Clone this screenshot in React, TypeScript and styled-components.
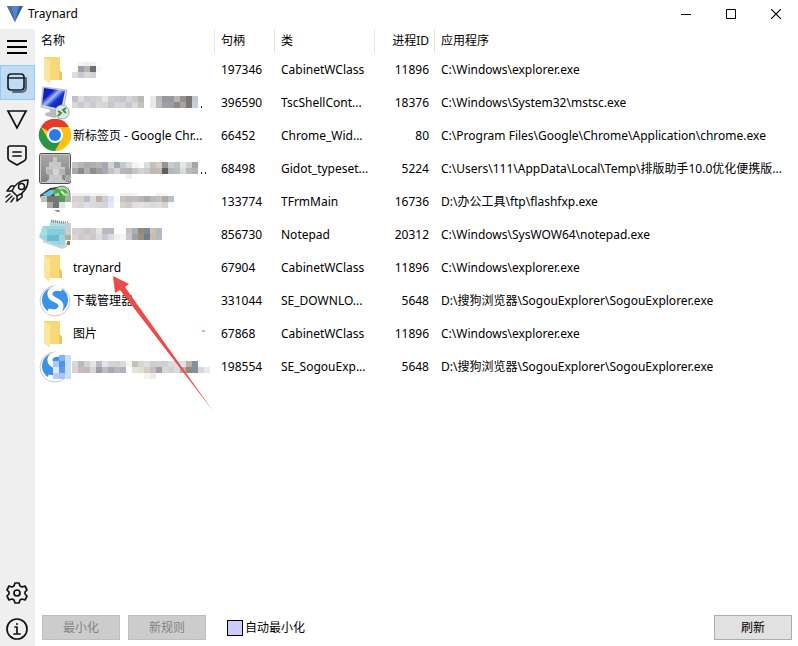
import React from 'react';
import styled, { createGlobalStyle, css } from 'styled-components';

const GlobalStyle = createGlobalStyle`
  *, *::before, *::after { box-sizing: border-box; }
  body { margin: 0; background: #fff; }
  body, button, input, table {
    font-family: 'Noto Sans', 'Noto Sans CJK SC', sans-serif;
    font-size: 12px;
    line-height: 16px;
    color: #000;
  }
`;

const Window = styled.div`
  display: flex;
  flex-direction: column;
  min-height: 100vh;
  background: #fff;
`;

const TitleBar = styled.header`
  display: flex;
  align-items: center;
  height: 29px;
  padding: 0 0 2px 7px;
`;

const Title = styled.h1`
  flex: 1;
  margin: 0 0 0 5px;
  font-size: 12px;
  font-weight: 400;
`;

const CaptionButton = styled.button`
  display: flex;
  align-items: center;
  justify-content: center;
  width: 45px;
  height: 26px;
  padding: 0;
  border: 0;
  background: transparent;
`;

const Body = styled.div`
  display: flex;
  flex: 1;
`;

const SideBar = styled.nav`
  display: flex;
  flex-direction: column;
  flex: none;
  gap: 1px;
  width: 35px;
  background: #efefef;
`;

const SideButton = styled.button<{ $active?: boolean }>`
  display: flex;
  align-items: center;
  justify-content: center;
  width: 35px;
  height: 35px;
  padding: 0 1px 0 0;
  border: 1px solid transparent;
  background: transparent;
  ${p => p.$active && css`
    border-color: #91c9f7;
    background: #c0dcf3;
  `}
`;

const Spacer = styled.div`
  flex: 1;
`;

const Main = styled.main`
  display: flex;
  flex-direction: column;
  flex: 1;
  min-width: 0;
`;

const Table = styled.table`
  width: 100%;
  table-layout: fixed;
  border-collapse: collapse;
`;

const Col = styled.col<{ $width?: number }>`
  width: ${p => (p.$width ? `${p.$width}px` : 'auto')};
`;

const Th = styled.th<{ $right?: boolean }>`
  height: 24px;
  padding: 0 6px;
  font-weight: 400;
  text-align: ${p => (p.$right ? 'right' : 'left')};
  box-shadow: inset -1px 0 #e5e5e5;
  &:last-child { box-shadow: none; }
`;

const Td = styled.td<{ $right?: boolean }>`
  height: 33px;
  padding: 0 6px;
  overflow: hidden;
  text-align: ${p => (p.$right ? 'right' : 'left')};
  text-overflow: ellipsis;
  white-space: nowrap;
`;

const NameTd = styled.td`
  height: 33px;
  padding: 0 3px;
`;

const NameCell = styled.div`
  display: flex;
  align-items: center;
  height: 33px;
`;

const NameText = styled.span`
  overflow: hidden;
  padding-left: 1px;
  text-overflow: ellipsis;
  white-space: nowrap;
`;

const IconSlot = styled.svg`
  flex: none;
  width: 34px;
  height: 33px;
`;

const MosaicSvg = styled.svg`
  flex: none;
  width: 138px;
  height: 33px;
`;

const TableArea = styled.section`
  position: relative;
  flex: 1;
`;

const Arrow = styled.svg`
  position: absolute;
  top: 245px;
  left: 75px;
  width: 105px;
  height: 139px;
  pointer-events: none;
`;

const Footer = styled.footer`
  display: flex;
  align-items: center;
  gap: 8px;
  padding: 0 6px 6px 7px;
`;

const Button = styled.button`
  width: 78px;
  height: 25px;
  padding: 0;
  border: 1px solid #adadad;
  background: #e1e1e1;
  &:disabled {
    border-color: #bfbfbf;
    background: #ccc;
    color: #838383;
  }
`;

const CheckLabel = styled.label`
  display: flex;
  flex: 1;
  align-items: center;
  gap: 2px;
  padding-left: 13px;
`;

const CheckBox = styled.input`
  width: 16px;
  height: 16px;
  margin: 0;
  border: 1px solid #000;
  background: #ccf;
  appearance: none;
  &:checked { background: #55c; }
`;

const FolderIcon = () => (
  <IconSlot viewBox="0 0 34 33" aria-hidden="true">
    <path d="M6 4h16v14l2 2v7H8z" fill="#f6d478" />
    <path d="M11 4h11v14l2 2v7H11z" fill="#f8d878" />
    <path d="M22 18l2 2v7h-3v-9z" fill="#edc45e" />
    <path d="M6 4l6 4v23l-6-5z" fill="#ffe49c" />
  </IconSlot>
);

const RemoteIcon = () => (
  <IconSlot viewBox="0 0 34 33" aria-hidden="true">
    <defs>
      <linearGradient id="screen" x1="0" y1="0" x2="1" y2="1">
        <stop offset="0" stopColor="#0b1fb6" />
        <stop offset=".3" stopColor="#0a22d0" />
        <stop offset=".45" stopColor="#a8baf8" />
        <stop offset=".6" stopColor="#1634d4" />
        <stop offset="1" stopColor="#061291" />
      </linearGradient>
    </defs>
    <path d="M11 22l10 2v5l-4 3-9-2-1-3 5-1z" fill="#b8bcc0" />
    <path d="M5 1l24 3-4 22L3 21z" fill="#d5dadd" stroke="#b6bdc2" />
    <path d="M6 2l21 3-4 18L4 19z" fill="url(#screen)" />
    <circle cx="24" cy="26" r="7" fill="#e6e8e7" stroke="#a2a5a7" />
    <path d="M20 25l3 2-3 3M28 22l-3 2 3 3" fill="none" stroke="#2c9a48" strokeWidth="2" />
  </IconSlot>
);

const ChromeIcon = () => (
  <IconSlot viewBox="0 0 34 33" aria-hidden="true">
    <circle cx="17" cy="16" r="16" fill="#fbc116" />
    <path d="M17 16L3 8A16 16 0 0 1 31 8z" fill="#e33b2e" />
    <path d="M3 8A16 16 0 0 0 17 32L24 20 10 20z" fill="#269547" />
    <path d="M17 8h14a16 16 0 0 1-14 24l7-12z" fill="#fbc116" />
    <circle cx="17" cy="16" r="8" fill="#fff" />
    <circle cx="17" cy="16" r="6" fill="#2c7be5" />
  </IconSlot>
);

const TypesetIcon = () => (
  <IconSlot viewBox="0 0 34 33" aria-hidden="true">
    <defs>
      <linearGradient id="metal" x1="0" y1="0" x2="0" y2="1">
        <stop offset="0" stopColor="#a9a9a9" />
        <stop offset="1" stopColor="#818181" />
      </linearGradient>
    </defs>
    <rect x="1.500" y="1.500" width="31" height="30" rx="2" fill="url(#metal)" stroke="#4d4d4d" />
    <rect x="2.500" y="2.500" width="29" height="28" rx="1" fill="none" stroke="#c9c9c9" />
    <path d="M15 5h4v5h4v5h4v6h-3v6l5 3H8l3-3v-6H8v-6h3v-5h4z" fill="#c7c8c9" />
    <path d="M9 17h6v6H9zM21 17h6v6h-6z" fill="#b6b6b6" />
    <path d="M15 17h6v6h-6z" fill="#d4d4d4" />
    <path d="M27 17h6v6h-6z" fill="#8e8e8e" />
    <path d="M27 23h6v6h-6z" fill="#aaa" />
  </IconSlot>
);

const FlashIcon = () => (
  <IconSlot viewBox="0 0 34 33" aria-hidden="true">
    <path d="M2 10l10-7 14-2-12 13H3z" fill="#29404c" />
    <path d="M4 10l8-5 10-1-11 8z" fill="#6ec2d8" />
    <circle cx="24" cy="9" r="8" fill="#c1c7c0" stroke="#747b75" />
    <path d="M16 9l3-6 3 2c4-2 7 0 8 4-3-2-4-1-5 2h-4V8z" fill="#2dc31d" />
    <path d="M23 6l3 3" stroke="#e6f6e2" strokeWidth="2" />
    <path d="M3 11h6v6H3z" fill="#b8c6bf" />
    <path d="M9 11h12v6H9zM15 17h6v6h-6z" fill="#777474" />
    <path d="M21 11h6v6h-6z" fill="#5c9664" />
    <path d="M27 11h6v6h-6z" fill="#9db79c" />
    <path d="M9 17h6v6H9z" fill="#aaa" />
    <path d="M21 17h6v6h-6z" fill="#dfe6df" />
    <path d="M16 25h5l1 2h-3z" fill="#8d8f8d" />
  </IconSlot>
);

const NotepadIcon = () => (
  <IconSlot viewBox="0 0 34 33" aria-hidden="true">
    <path d="M13 2l17 3-3 25-20-6z" fill="#b5dce3" />
    <path d="M13 3l17 2" stroke="#8b999e" strokeWidth="3" strokeDasharray="1 1" />
    <path d="M5 8h22v18l-6 2-16-6-4-3z" fill="#9bd5df" />
    <path d="M3 11h6v6H3z" fill="#a8dde6" />
    <path d="M9 11h6v6H9z" fill="#8bcddc" />
    <path d="M15 11h12v6H15z" fill="#89cbdb" />
    <path d="M9 17h12v6H9z" fill="#69bdcf" />
    <path d="M27 5h6v12h-6z" fill="#c4d1d0" />
    <path d="M27 17h6v5h-6z" fill="#b7ad9b" />
    <path d="M5 23l19 7 4-2 1-3" fill="none" stroke="#c1d4dc" strokeWidth="2" />
    <path d="M29 23h3v4h-3z" fill="#9b793b" />
  </IconSlot>
);

const SogouIcon = ({ blurred }: { blurred?: boolean }) => (
  <IconSlot viewBox="0 0 34 33" aria-hidden="true">
    <circle cx="17" cy="17" r="15" fill="#fff" stroke="#c9c9c9" />
    <circle cx="17" cy="16" r="13" fill="#3c91e8" />
    <path d="M24 5C17 3 11 6 12 11c1 6 11 4 11 11 0 5-6 7-13 5" fill="none" stroke="#fff" strokeWidth="5" />
    {blurred && (
      <g>
        <path d="M15 11h6v6h-6z" fill="#a8cbf7" />
        <path d="M21 5h6v6h-6z" fill="#82b6ee" />
        <path d="M27 5h6v24h-6z" fill="#c9dff6" />
        <path d="M21 11h6v6h-6z" fill="#4e91ed" />
        <path d="M15 17h6v6h-6z" fill="#dbe8fc" />
        <path d="M21 17h6v6h-6z" fill="#5e9af0" />
        <path d="M15 23h6v6h-6z" fill="#b3d0fa" />
        <path d="M21 23h6v6h-6z" fill="#a6c8f7" />
      </g>
    )}
  </IconSlot>
);

type Tiles = { top: number; heights: number[]; rows: string[][] };

const Mosaic = ({ tiles, dots = 0 }: { tiles: Tiles; dots?: number }) => {
  const tops = tiles.heights.map((_, i) =>
    tiles.heights.slice(0, i).reduce((sum, h) => sum + h, tiles.top));
  return (
    <MosaicSvg viewBox="0 0 138 33" role="img" aria-label="已隐藏">
      {tiles.rows.map((row, r) =>
        row.map((color, c) => color && (
          <rect key={`${r}-${c}`} x={c * 6} y={tops[r]} width="6" height={tiles.heights[r]} fill={`#${color}`} />
        )))}
      {dots > 0 && <rect x="129" y="20" width="1" height="2" fill="#222" />}
      {dots > 1 && <rect x="133" y="20" width="1" height="2" fill="#222" />}
    </MosaicSvg>
  );
};

const split = (s: string) => s.split(' ').map(c => (c === '-' ? '' : c));

const folderTiles: Tiles = {
  top: 9, heights: [4, 6, 6],
  rows: [
    split('- f4f4f6 eeeef1 f1f1f4 -'),
    split('fffff0 d8d5e2 8d879c b8b5b3 706d70'),
    split('d6d8d9 c8c7cc d5d5d6 c2bfc5 e0e0e2'),
  ].map((row, i) => (i === 1
    ? ['fffff0', 'a09bae', 'b8b5b3', '706d70', 'fbf8f2']
    : i === 2 ? ['dcdcdc', 'c8c7cc', 'd9d9da', 'd2cfd5', ''] : row)),
};

const remoteTiles: Tiles = {
  top: 10, heights: [6, 6],
  rows: [
    split('bfc0c3 e1dcdf c9cbce d2cdd1 d1d3d4 e6e5e5 cfcccc cbc9cf c4c5ca d8d4d2 c9c8cc bbb7b5 - e9e8ea b8b9ba 97979b 9999a0 b9b5b2 939191 777775 c1cad4'),
    split('d8d8d9 ccc9ce d6d7dc cdcacb dfd8d8 d3d6dc c7c8cb d8d5d6 d4d4d8 c8c6ca d9d8dc c4c1bd - ebe8e5 c0bdbe a0a0a4 a09ea3 8d8b8b aaa29e 797772 c7d0d7'),
  ],
};

const typesetTiles: Tiles = {
  top: 10, heights: [6, 6, 5],
  rows: [
    split('c3c3c6 b5b4b6 aeaaa6 b3aeac b9b5b6 a6a7b1 d4d4d7 9faab1 c5c9ce d9dce2 f1f4f4 fbfbfb dedddd c2c1c1 d4ccc8 969696 cccccb bec2c2 e2e8e7 d0d0cf a4a7aa'),
    split('aaa7a8 8b8b8d b0adb0 8e8e92 a09fa3 a8a8b6 c3c2c5 d6d3d1 b3b6bb b6b3b7 c5c5c5 d0d3d3 ceccca b9b9b9 c9b9aa 5e5f63 aeb8c1 b9bdbd d3dedd b9b9b8 b2b4ae'),
    split('- - - - - - - - - f0eeee - - - - - - - - - - -'),
  ],
};

const flashTiles: Tiles = {
  top: 8, heights: [3, 6, 6],
  rows: [
    split('f0f0f0 f1f1f2 eff1f5 f4f3f3 f2f1ef f4f4f4 - - f1f1f1 f3f3f3 f4f4f4 - - - f2f2f2 f5f5f5 -'),
    split('d5cfd1 d3d1d2 b9bdc8 dfdbdc beb3a7 c8d0d4 dce4f3 fafbfc c5c0c4 c5b8b9 c0bebe b8b6b5 adabaa bbb9b9 c3c0c0 b3a7a8 b8c1ca'),
    split('e1dadd d8d3d7 dfdfe4 dbd8d8 d9d6d9 d3d5dc e7e8f1 - d6d0d1 d1c9ce e0dfdf e4e2e2 dededd dcdada e0dfdf d6d3d3 f4f8fa'),
  ],
};

const notepadTiles: Tiles = {
  top: 10, heights: [6, 6],
  rows: [
    split('d4cfcf d1cdd5 c7c6c5 cdcdd1 e0e8df bdb6bd b7bac5 - - c4c2ba abacb7 958a80 7e8892 ccc0b2 adbac9'),
    split('dcd4d4 cccbcc d5ced3 cbc7cb dedbdf ccc6d2 d9dce0 efeff0 f4f4f5 c5c8cf 9fa1a9 9e8e7b 717d8b cbbcaa b2bcc8'),
  ],
};

const sogouTiles: Tiles = {
  top: 11, heights: [6, 6, 6],
  rows: [
    split('dbd9d4 bab9bd d0d0d8 e5e5e6 bcbdc2 e4e5e5 d4d3d7 d2d2d2 d9dadf f4f4ee c1c0bc d7d5d3 dfdddc d1cbd2 d4cfd5 cad0d6 e1d9dc d3e0e5 dce2e9 b9b1a1 87939c - -'),
    split('d8d4d3 c5bbb9 c5b7ba d5d5d9 9e9ca9 bbbcc4 a9aab0 b8b8bb b2b1bd - e4e6da e3dfcc d2cfc5 c4bebc a69ca4 dcd8da cbd4d4 dedbda b9aaa4 8f8b81 869098 d8d8d9 e9e9ec'),
    split('- - - - - - - - - - - - f5f4ee eeecef - - - - - - - - -'),
  ],
};

interface WindowRow {
  icon: React.ReactNode;
  name: React.ReactNode;
  handle: string;
  cls: string;
  pid: string;
  app: string;
}

const rows: WindowRow[] = [
  { icon: <FolderIcon />, name: <Mosaic tiles={folderTiles} />, handle: '197346', cls: 'CabinetWClass', pid: '11896', app: 'C:\\Windows\\explorer.exe' },
  { icon: <RemoteIcon />, name: <Mosaic tiles={remoteTiles} dots={1} />, handle: '396590', cls: 'TscShellCont...', pid: '18376', app: 'C:\\Windows\\System32\\mstsc.exe' },
  { icon: <ChromeIcon />, name: '新标签页 - Google Chr...', handle: '66452', cls: 'Chrome_Wid...', pid: '80', app: 'C:\\Program Files\\Google\\Chrome\\Application\\chrome.exe' },
  { icon: <TypesetIcon />, name: <Mosaic tiles={typesetTiles} dots={2} />, handle: '68498', cls: 'Gidot_typeset...', pid: '5224', app: 'C:\\Users\\111\\AppData\\Local\\Temp\\排版助手10.0优化便携版...' },
  { icon: <FlashIcon />, name: <Mosaic tiles={flashTiles} />, handle: '133774', cls: 'TFrmMain', pid: '16736', app: 'D:\\办公工具\\ftp\\flashfxp.exe' },
  { icon: <NotepadIcon />, name: <Mosaic tiles={notepadTiles} />, handle: '856730', cls: 'Notepad', pid: '20312', app: 'C:\\Windows\\SysWOW64\\notepad.exe' },
  { icon: <FolderIcon />, name: 'traynard', handle: '67904', cls: 'CabinetWClass', pid: '11896', app: 'C:\\Windows\\explorer.exe' },
  { icon: <SogouIcon />, name: '下载管理器', handle: '331044', cls: 'SE_DOWNLO...', pid: '5648', app: 'D:\\搜狗浏览器\\SogouExplorer\\SogouExplorer.exe' },
  { icon: <FolderIcon />, name: '图片', handle: '67868', cls: 'CabinetWClass', pid: '11896', app: 'C:\\Windows\\explorer.exe' },
  { icon: <SogouIcon blurred />, name: <Mosaic tiles={sogouTiles} />, handle: '198554', cls: 'SE_SogouExp...', pid: '5648', app: 'D:\\搜狗浏览器\\SogouExplorer\\SogouExplorer.exe' },
];

const LineIcon = ({ children }: { children: React.ReactNode }) => (
  <svg width="26" height="26" viewBox="0 0 26 26" fill="none" stroke="#111" strokeWidth="1.700" strokeLinejoin="round" strokeLinecap="round" aria-hidden="true">
    {children}
  </svg>
);

const gearPath = 'M11 3h4l1 3 2 1 3-1 2 4-2 2v2l2 2-2 4-3-1-2 1-1 3h-4l-1-3-2-1-3 1-2-4 2-2v-2l-2-2 2-4 3 1 2-1z';

export default function App() {
  return (
    <Window>
      <GlobalStyle />
      <TitleBar>
        <svg width="16" height="16" viewBox="0 0 16 16" aria-hidden="true">
          <path d="M0 0h16L8 16z" fill="#2f5c9c" />
          <path d="M4 0h8L8 16z" fill="#5585c5" />
          <path d="M0 0h4l4 16z" fill="#3f70b2" />
        </svg>
        <Title>Traynard</Title>
        <CaptionButton aria-label="最小化窗口">
          <svg width="10" height="10" viewBox="0 0 10 10"><path d="M0 5h10v1H0z" /></svg>
        </CaptionButton>
        <CaptionButton aria-label="最大化窗口">
          <svg width="10" height="10" viewBox="0 0 10 10"><path d="M.5.5h9v9h-9z" fill="none" stroke="#000" /></svg>
        </CaptionButton>
        <CaptionButton aria-label="关闭窗口">
          <svg width="10" height="10" viewBox="0 0 10 10"><path d="M0 0l10 10M10 0L0 10" stroke="#000" strokeWidth="1.200" /></svg>
        </CaptionButton>
      </TitleBar>
      <Body>
        <SideBar>
          <SideButton aria-label="菜单">
            <svg width="20" height="14" viewBox="0 0 20 14"><path d="M0 0h20v2H0zM0 6h20v2H0zM0 12h20v2H0z" /></svg>
          </SideButton>
          <SideButton $active aria-label="窗口">
            <LineIcon>
              <path d="M22 8v10a4 4 0 0 1-4 4H9" stroke="#5d6b77" strokeWidth="2" />
              <rect x="4" y="4" width="16" height="16" rx="3" stroke="#1a2229" />
              <path d="M4 8h16" stroke="#1a2229" />
            </LineIcon>
          </SideButton>
          <SideButton aria-label="托盘">
            <LineIcon><path d="M4 5h18l-9 17z" strokeLinejoin="miter" /></LineIcon>
          </SideButton>
          <SideButton aria-label="规则">
            <LineIcon>
              <path d="M6 4h14q2 0 2 2v10q0 2-2 3l-7 4-7-4q-2-1-2-3V6q0-2 2-2zM9 10h8M9 14h8" />
            </LineIcon>
          </SideButton>
          <SideButton aria-label="启动">
            <LineIcon>
              <path d="M8 13C10 7 16 2 24 2c0 8-5 14-11 16zM11 8L7 8l-4 5 5 0M18 15v4l-5 4v-5M8 13l5 5" strokeWidth="1.500" />
              <circle cx="17.500" cy="8.500" r="3" strokeWidth="1.500" />
              <path d="M6 16l-4 3M8 18l-6 6M10 20l-3 4" strokeWidth="1.300" />
            </LineIcon>
          </SideButton>
          <Spacer />
          <SideButton aria-label="设置">
            <LineIcon><path d={gearPath} /><circle cx="13" cy="13" r="3" /></LineIcon>
          </SideButton>
          <SideButton aria-label="关于">
            <LineIcon>
              <circle cx="13" cy="13" r="10" />
              <path d="M11 11h2v7M10 18h6" />
              <circle cx="13" cy="8" r="1" fill="#111" stroke="none" />
            </LineIcon>
          </SideButton>
        </SideBar>
        <Main>
          <TableArea>
            <Table>
              <colgroup>
                <Col $width={180} />
                <Col $width={60} />
                <Col $width={100} />
                <Col $width={60} />
                <Col />
              </colgroup>
              <thead>
                <tr>
                  <Th>名称</Th>
                  <Th>句柄</Th>
                  <Th>类</Th>
                  <Th $right>进程ID</Th>
                  <Th>应用程序</Th>
                </tr>
              </thead>
              <tbody>
                {rows.map(row => (
                  <tr key={row.handle}>
                    <NameTd>
                      <NameCell>
                        {row.icon}
                        {typeof row.name === 'string' ? <NameText>{row.name}</NameText> : row.name}
                      </NameCell>
                    </NameTd>
                    <Td>{row.handle}</Td>
                    <Td>{row.cls}</Td>
                    <Td $right>{row.pid}</Td>
                    <Td>{row.app}</Td>
                  </tr>
                ))}
              </tbody>
            </Table>
            <Arrow viewBox="0 0 105 139" aria-hidden="true">
              <path d="M3 2l16 8-4 3 88 124L10 16l-5 3z" fill="#ec4c4a" />
              <path d="M92 57h3" stroke="#ec4c4a" />
            </Arrow>
          </TableArea>
          <Footer>
            <Button disabled>最小化</Button>
            <Button disabled>新规则</Button>
            <CheckLabel>
              <CheckBox type="checkbox" />
              自动最小化
            </CheckLabel>
            <Button>刷新</Button>
          </Footer>
        </Main>
      </Body>
    </Window>
  );
}
